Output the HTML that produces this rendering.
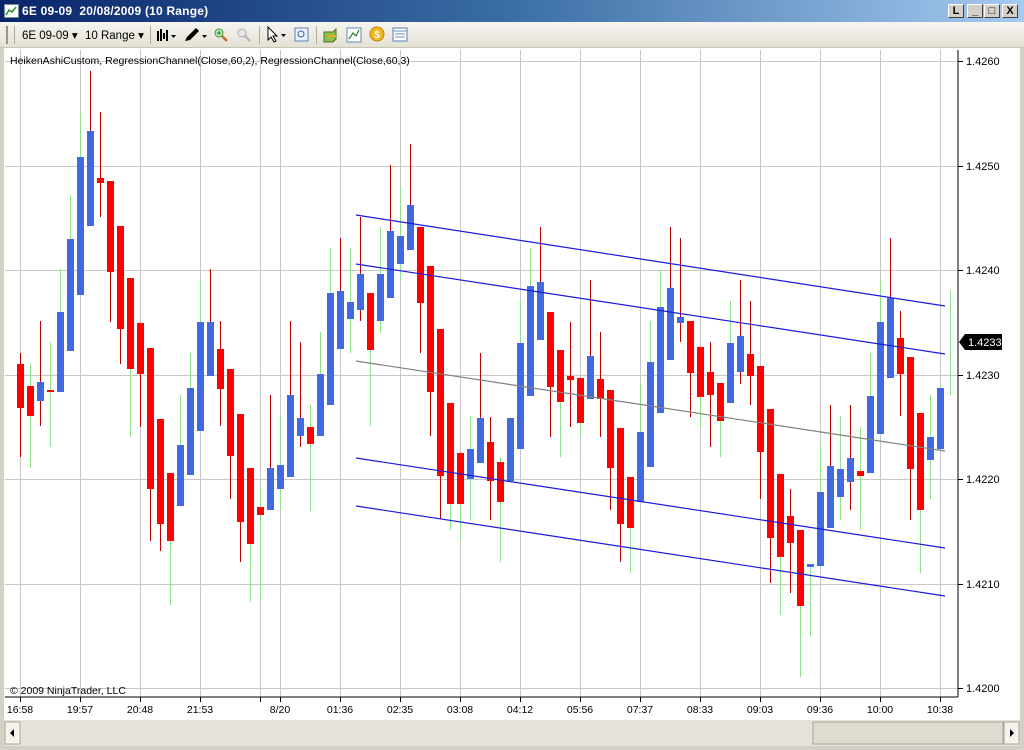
<!DOCTYPE html>
<html><head><meta charset="utf-8"><style>
*{margin:0;padding:0;box-sizing:border-box}
body{width:1024px;height:750px;background:#d4d0c8;font-family:"Liberation Sans",sans-serif;position:relative;overflow:hidden}
#title{position:absolute;left:0;top:0;width:1024px;height:22px;background:linear-gradient(to right,#0a246a,#3a6ea5 50%,#a6caf0);}
#title .t{position:absolute;left:22px;top:4px;color:#fff;font-weight:bold;font-size:12px;letter-spacing:0.2px}
.wb{position:absolute;top:4px;width:16px;height:14px;background:#d4d0c8;border:1px solid;border-color:#fff #404040 #404040 #fff;font-size:11px;font-weight:bold;text-align:center;line-height:12px;color:#000}
#tb{position:absolute;left:0;top:22px;width:1024px;height:26px;background:linear-gradient(#f6f5f0,#e4e1d5);border-bottom:1px solid #c8c4b4}
#tb span{position:absolute;top:6px;font-size:11.5px;color:#000}
.sep{position:absolute;top:4px;width:1px;height:18px;background:#b0ac9c}
#chart{position:absolute;left:4px;top:48px;width:1016px;height:672px;background:#fff}
</style></head><body>
<div id="title">
<svg style="position:absolute;left:4px;top:4px" width="15" height="14"><rect x="0.5" y="0.5" width="14" height="13" fill="#fff" stroke="#789"/><path d="M2 11 L5 6 L8 8 L12 3" stroke="#2a8a2a" stroke-width="1.5" fill="none"/></svg>
<div class="t">6E 09-09&nbsp; 20/08/2009 (10 Range)</div>
<div class="wb" style="left:948px">L</div>
<div class="wb" style="left:967px">_</div>
<div class="wb" style="left:984px">□</div>
<div class="wb" style="left:1002px">X</div>
</div>
<div id="tb">
<div class="sep" style="left:6px;background:#999;width:2px;border-left:1px dotted #888"></div>
<div class="sep" style="left:14px"></div>
<span style="left:22px">6E 09-09 ▾</span>
<span style="left:85px">10 Range ▾</span>
<div class="sep" style="left:150px"></div>
<svg style="position:absolute;left:156px;top:5px" width="22" height="16"><path d="M2 4v10M5 2v12M8 6v6M11 3v11" stroke="#000" stroke-width="2"/><path d="M15 8h5l-2.5 3z" fill="#000"/></svg>
<svg style="position:absolute;left:182px;top:5px" width="26" height="16"><path d="M3 14 L5 10 L14 1 L17 4 L8 13 Z" fill="#000"/><path d="M20 8h5l-2.5 3z" fill="#000"/></svg>
<svg style="position:absolute;left:213px;top:5px" width="16" height="16"><circle cx="6" cy="6" r="4" fill="#bfe8bf" stroke="#3a9a3a"/><path d="M9 9 L14 14" stroke="#c07030" stroke-width="2.5"/><path d="M4 6h4M6 4v4" stroke="#208020"/></svg>
<svg style="position:absolute;left:236px;top:5px" width="16" height="16"><circle cx="6" cy="6" r="4" fill="#e8e8e8" stroke="#aaa"/><path d="M9 9 L14 14" stroke="#bbb" stroke-width="2.5"/></svg>
<div class="sep" style="left:259px"></div>
<svg style="position:absolute;left:265px;top:4px" width="24" height="18"><path d="M3 1 L3 14 L6 11 L9 16 L11 15 L8 10 L12 10 Z" fill="#fff" stroke="#000"/><path d="M16 8h5l-2.5 3z" fill="#000"/></svg>
<svg style="position:absolute;left:294px;top:5px" width="16" height="16"><rect x="1" y="1" width="13" height="13" fill="#e8f0ff" stroke="#6080b0"/><circle cx="7" cy="7" r="3" fill="none" stroke="#4060a0"/></svg>
<div class="sep" style="left:316px"></div>
<svg style="position:absolute;left:322px;top:5px" width="18" height="16"><path d="M2 5h9l3-3v10l-3 3H2z" fill="#8cc04a" stroke="#507020"/><path d="M6 9h8" stroke="#e8b020" stroke-width="2"/></svg>
<svg style="position:absolute;left:346px;top:5px" width="16" height="16"><rect x="1" y="1" width="14" height="14" fill="#fff" stroke="#5a8ac0"/><path d="M3 12 L7 6 L10 9 L13 3" stroke="#2a8a2a" stroke-width="1.3" fill="none"/></svg>
<svg style="position:absolute;left:369px;top:4px" width="17" height="17"><circle cx="8" cy="8" r="7" fill="#f0b820" stroke="#c08000"/><text x="8" y="12" font-size="10" text-anchor="middle" fill="#fff" font-weight="bold" font-family="Liberation Sans">$</text></svg>
<svg style="position:absolute;left:392px;top:5px" width="16" height="16"><rect x="1" y="1" width="14" height="13" fill="#fff" stroke="#5a7ab0"/><path d="M1 4h14M3 7h10M3 10h10" stroke="#7090c0"/></svg>
</div>
<div id="chart"></div>
<svg style="position:absolute;left:0;top:0" width="1024" height="750" id="sv">
<g stroke="#c8c8c8" stroke-width="1" id="grid"></g>
<g id="cand"></g>
<g fill="none" stroke-width="1.2">
<line x1="356" y1="215" x2="945" y2="306" stroke="#1a1adc"/>
<line x1="356" y1="264" x2="945" y2="354" stroke="#1a1adc"/>
<line x1="356" y1="361" x2="945" y2="451" stroke="#808080"/>
<line x1="356" y1="458" x2="945" y2="548" stroke="#1a1adc"/>
<line x1="356" y1="506" x2="945" y2="596" stroke="#1a1adc"/>
</g>
<line x1="958" y1="50" x2="958" y2="697" stroke="#000"/>
<line x1="5" y1="697" x2="958" y2="697" stroke="#000"/>
<g stroke="#000" id="ticks"></g>
<g font-family="Liberation Sans" font-size="11" fill="#000">
<text x="10" y="64" font-size="10.5">HeikenAshiCustom, RegressionChannel(Close,60,2), RegressionChannel(Close,60,3)</text>
<text x="10" y="694" font-size="10.5">© 2009 NinjaTrader, LLC</text>
<text x="966" y="65">1.4260</text><text x="966" y="170">1.4250</text><text x="966" y="274">1.4240</text><text x="966" y="379">1.4230</text><text x="966" y="483">1.4220</text><text x="966" y="588">1.4210</text><text x="966" y="692">1.4200</text>
<g text-anchor="middle" font-size="10.5">
<text x="20" y="713">16:58</text><text x="80" y="713">19:57</text><text x="140" y="713">20:48</text><text x="200" y="713">21:53</text><text x="280" y="713">8/20</text><text x="340" y="713">01:36</text><text x="400" y="713">02:35</text><text x="460" y="713">03:08</text><text x="520" y="713">04:12</text><text x="580" y="713">05:56</text><text x="640" y="713">07:37</text><text x="700" y="713">08:33</text><text x="760" y="713">09:03</text><text x="820" y="713">09:36</text><text x="880" y="713">10:00</text><text x="940" y="713">10:38</text>
</g>
<path d="M959 342 L965 334 H1002 V350 H965 Z" fill="#000"/>
<text x="968" y="346" fill="#fff">1.4233</text>
</g>
<rect x="4" y="720" width="1016" height="26" fill="#e4e2d9"/>
<rect x="5" y="722" width="15" height="22" fill="#f4f3ee" stroke="#a8a598"/><path d="M14 729 L10 733 L14 737Z" fill="#000"/>
<rect x="813" y="722" width="190" height="22" fill="#dedbd0" stroke="#a8a598"/>
<rect x="1004" y="722" width="15" height="22" fill="#f4f3ee" stroke="#a8a598"/><path d="M1010 729 L1014 733 L1010 737Z" fill="#000"/>
</svg>
<script>
var NS="http://www.w3.org/2000/svg",g=document.getElementById('grid'),c=document.getElementById('cand'),tk=document.getElementById('ticks');
function el(p,t,a){var e=document.createElementNS(NS,t);for(var k in a)e.setAttribute(k,a[k]);p.appendChild(e);return e}
[20,80,140,200,260,280,340,400,460,520,580,640,700,760,820,880,940].forEach(function(x){el(g,'line',{x1:x+.5,y1:50,x2:x+.5,y2:697});el(tk,'line',{x1:x+.5,y1:697,x2:x+.5,y2:702})});
[61,166,270,375,479,584,688].forEach(function(y){el(g,'line',{x1:5,y1:y+.5,x2:958,y2:y+.5});el(tk,'line',{x1:958,y1:y+.5,x2:963,y2:y+.5})});
var R='#ff0000',B='#4169e1',WR='#b80000',WG='#90e090';
var d=[
[20,R,364,408,353,457,WR],[30,R,386,416,363,468,WG],[40,B,382,401,321,426,WR],[50,R,390,392,342,447,WG],
[60,B,312,392,269,392,WG],[70,B,239,351,195,351,WG],[80,B,157,295,112,295,WG],[90,B,131,226,71,226,WR],
[100,R,178,183,112,217,WR],[110,R,181,272,181,322,WR],[120,R,226,329,226,364,WR],[130,R,278,369,278,437,WG],
[140,R,323,374,323,427,WR],[150,R,348,489,348,541,WR],[160,R,419,524,419,551,WR],[170,R,473,541,473,605,WG],
[180,B,445,506,395,506,WG],[190,B,388,475,353,475,WG],[200,B,322,431,280,431,WG],[210,B,322,376,269,376,WR],
[220,R,349,389,321,426,WR],[230,R,369,456,369,499,WR],[240,R,414,522,414,562,WR],[250,R,468,544,468,602,WG],
[260,R,507,515,488,600,WG],[270,B,468,510,395,510,WR],[280,B,465,489,416,510,WG],[290,B,395,477,321,477,WR],
[300,B,418,436,342,447,WR],[310,R,427,444,405,511,WG],[320,B,374,436,332,436,WG],[330,B,293,405,248,405,WG],
[340,B,291,349,238,349,WR],[350,B,302,319,248,353,WG],[360,B,274,310,217,321,WR],[370,R,293,350,293,426,WG],
[380,B,274,321,227,333,WG],[390,B,231,298,165,298,WR],[400,B,236,264,186,280,WG],[410,B,205,250,144,250,WR],
[420,R,227,303,227,353,WR],[430,R,266,392,266,436,WR],[440,R,329,476,329,519,WR],[450,R,403,504,403,530,WG],
[460,R,453,504,453,542,WG],[470,B,449,479,416,521,WG],[480,B,418,463,353,463,WR],[490,R,442,481,417,520,WR],
[500,R,462,502,457,562,WG],[510,B,418,481,418,481,WG],[520,B,343,449,301,449,WG],[530,B,286,396,248,396,WG],
[540,B,282,340,227,340,WR],[550,R,312,387,312,437,WR],[560,R,350,402,350,457,WG],[570,R,376,380,322,427,WR],
[580,R,378,423,378,437,WG],[590,B,356,399,280,399,WR],[600,R,379,399,332,437,WR],[610,R,390,468,390,510,WR],
[620,R,428,524,428,562,WR],[630,R,477,528,477,573,WG],[640,B,432,502,383,502,WG],[650,B,362,467,321,467,WG],
[660,B,307,413,270,413,WG],[670,B,288,360,227,360,WR],[680,B,317,323,238,342,WR],[690,R,321,373,321,417,WR],
[700,R,347,397,347,427,WG],[710,R,372,395,342,447,WR],[720,R,383,421,383,457,WG],[730,B,343,403,301,403,WG],
[740,B,336,372,280,384,WR],[750,R,354,376,301,405,WR],[760,R,366,452,366,499,WR],[770,R,409,538,409,583,WR],
[780,R,474,557,474,615,WG],[790,R,516,543,489,593,WR],[800,R,530,606,530,677,WG],[810,B,564,567,564,636,WG],
[820,B,492,566,447,566,WG],[830,B,466,528,405,528,WR],[840,B,469,497,416,520,WG],[850,B,458,482,405,510,WR],
[860,R,471,476,427,530,WG],[870,B,396,473,353,473,WG],[880,B,322,434,280,434,WG],[890,B,298,378,238,378,WR],
[900,R,338,374,311,416,WR],[910,R,357,469,357,520,WR],[920,R,413,510,413,573,WG],[930,B,437,460,395,499,WG],
[940,B,388,449,384,449,WG]];
el(c,'line',{x1:950.5,y1:290,x2:950.5,y2:395,stroke:WG});
d.forEach(function(a){var x=a[0];el(c,'line',{x1:x+.5,y1:a[4],x2:x+.5,y2:a[5],stroke:a[6]});
el(c,'rect',{x:x-3,y:a[2],width:7,height:Math.max(2,a[3]-a[2]),fill:a[1]});});
</script>
</body></html>
